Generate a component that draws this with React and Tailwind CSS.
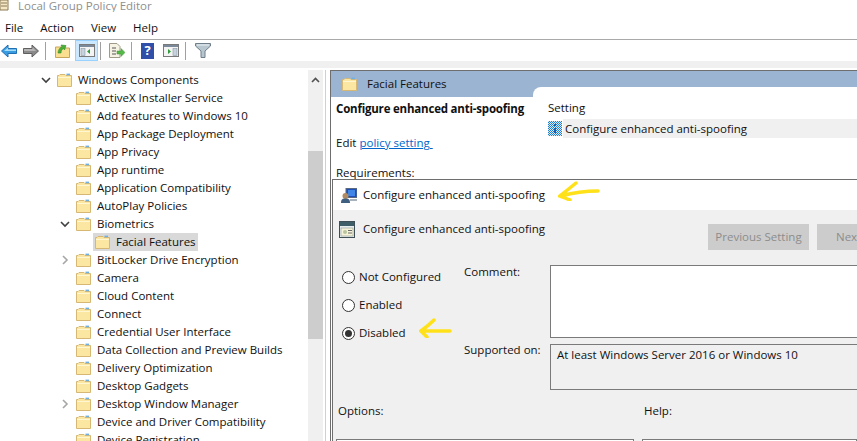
import React from 'react';

const Folder = ({ className = '' }) => (
  <svg width="15" height="14" viewBox="0 0 15 14" className={className}>
    <path d="M0.5 2.5 H2 L3 1.5 H8 L9 2.5 H14.5 V13.5 H0.5 Z" fill="#fbe6a2" stroke="#d6b874" />
    <path d="M1 4 H14 V5 H1 Z" fill="#fff6d2" />
    <path d="M9.5 0.6 H13 V2.2 H9.5 Z" fill="#6fb0e4" />
  </svg>
);

const Chevron = ({ open }) =>
  open ? (
    <svg width="10" height="10" viewBox="0 0 10 10">
      <path d="M1 3 L5 7 L9 3" fill="none" stroke="#404040" strokeWidth="1.6" />
    </svg>
  ) : (
    <svg width="10" height="10" viewBox="0 0 10 10">
      <path d="M3 1 L7 5 L3 9" fill="none" stroke="#a6a6a6" strokeWidth="1.6" />
    </svg>
  );

const treeRows = [
  { label: 'Windows Components', level: 0, open: true },
  { label: 'ActiveX Installer Service', level: 1 },
  { label: 'Add features to Windows 10', level: 1 },
  { label: 'App Package Deployment', level: 1 },
  { label: 'App Privacy', level: 1 },
  { label: 'App runtime', level: 1 },
  { label: 'Application Compatibility', level: 1 },
  { label: 'AutoPlay Policies', level: 1 },
  { label: 'Biometrics', level: 1, open: true },
  { label: 'Facial Features', level: 2, selected: true },
  { label: 'BitLocker Drive Encryption', level: 1, closed: true },
  { label: 'Camera', level: 1 },
  { label: 'Cloud Content', level: 1 },
  { label: 'Connect', level: 1 },
  { label: 'Credential User Interface', level: 1 },
  { label: 'Data Collection and Preview Builds', level: 1 },
  { label: 'Delivery Optimization', level: 1 },
  { label: 'Desktop Gadgets', level: 1 },
  { label: 'Desktop Window Manager', level: 1, closed: true },
  { label: 'Device and Driver Compatibility', level: 1 },
  { label: 'Device Registration', level: 1 },
];

const TreeRow = ({ row }) => {
  const indent = row.level === 0 ? 'pl-[41px]' : row.level === 1 ? 'pl-[60px]' : 'pl-[79px]';
  return (
    <div className={`flex h-[18px] shrink-0 items-center ${indent}`}>
      <span className="flex w-[16px] shrink-0 justify-start">
        {row.open && <Chevron open />}
        {row.closed && <Chevron />}
      </span>
      <span className={`flex h-[18px] items-center pr-[2px] ${row.selected ? 'bg-[#d9d9d9] -ml-[2px] pl-[2px]' : ''}`}>
        <Folder className="mr-[6px]" />
        <span className="whitespace-nowrap">{row.label}</span>
      </span>
    </div>
  );
};

const Sep = ({ className = '' }) => <div className={`h-[18px] w-px bg-[#a0a0a0] ${className}`} />;

const Toolbar = () => (
  <div className="flex h-[22px] items-center border-t border-[#a9a9a9] bg-white">
    <svg width="16" height="14" viewBox="0 0 16 14" className="ml-[1px]">
      <path d="M0.5 7 L7 1 V4.5 H15.5 V9.5 H7 V13 Z" fill="#3a9ce0" stroke="#1f6fb5" />
      <path d="M3 7 L7 3.5 V5.5 H15 V7 Z" fill="#a5dcf7" />
    </svg>
    <svg width="16" height="14" viewBox="0 0 16 14" className="ml-[6px]">
      <path d="M15.5 7 L9 1 V4.5 H0.5 V9.5 H9 V13 Z" fill="#8a8a8a" stroke="#5f5f5f" />
      <path d="M1 5 H9.5 V3 L13 7 H1 Z" fill="#b5b5b5" />
    </svg>
    <Sep className="ml-[6px]" />
    <svg width="15" height="14" viewBox="0 0 15 14" className="ml-[9px]">
      <path d="M0.5 3 H6 L7 4 H14.5 V13.5 H0.5 Z" fill="#fbdf90" stroke="#c7a55a" />
      <path d="M3 9 C3.5 5 5 3.5 7 3 L6 1 L11 1.5 L9.5 6 L8.5 4.5 C7 5 6 7 6 9 Z" fill="#4caf3a" stroke="#2f8a25" strokeWidth="0.6" />
    </svg>
    <div className="ml-[5px] flex h-[21px] w-[23px] items-center justify-center border border-[#99d1ff] bg-[#cce8ff]">
      <svg width="16" height="13" viewBox="0 0 16 13">
        <rect x="0.5" y="0.5" width="15" height="12" fill="#f4f4f4" stroke="#7a7a7a" />
        <rect x="1" y="1" width="14" height="2" fill="#7a8a9a" />
        <rect x="2" y="4.5" width="4" height="7" fill="#c6d3de" stroke="#7d8a96" strokeWidth="0.5" />
        <path d="M11 5 V10 L8 7.5 Z" fill="#2e9a3a" />
      </svg>
    </div>
    <Sep className="ml-[2px]" />
    <svg width="16" height="15" viewBox="0 0 16 15" className="ml-[8px]">
      <path d="M0.5 0.5 H8 L11 3.5 V14.5 H0.5 Z" fill="#f7f3e4" stroke="#a09a88" />
      <path d="M3 5 H7 M3 8 H7 M3 11 H7" stroke="#555" strokeWidth="1" />
      <path d="M8 8 H12 V5.5 L16 9.5 L12 13.5 V11 H8 Z" fill="#56b848" stroke="#3b9230" strokeWidth="0.5" />
    </svg>
    <Sep className="ml-[6px]" />
    <div className="ml-[9px] flex h-[16px] w-[13px] items-center justify-center bg-[#2f4fa8] text-[13px] font-bold leading-none text-white">?</div>
    <svg width="16" height="13" viewBox="0 0 16 13" className="ml-[9px]">
      <rect x="0.5" y="0.5" width="15" height="12" fill="#f4f4f4" stroke="#7a7a7a" />
      <rect x="1" y="1" width="14" height="2" fill="#7a8a9a" />
      <rect x="10" y="4.5" width="4" height="7" fill="#c6d3de" stroke="#7d8a96" strokeWidth="0.5" />
      <path d="M5 5 V10 L8 7.5 Z" fill="#2e9a3a" />
    </svg>
    <Sep className="ml-[6px]" />
    <svg width="16" height="15" viewBox="0 0 16 15" className="ml-[9px]">
      <path d="M0.5 0.5 H15.5 V3 L10 8 V14.5 H6 V8 L0.5 3 Z" fill="#b7c6cf" stroke="#6e7f8a" />
      <path d="M2 2 H14" stroke="#eef3f6" />
    </svg>
  </div>
);

const Radio = ({ label, checked }) => (
  <div className="flex h-[28px] items-center pl-[9px]">
    <span className="flex h-[13px] w-[13px] items-center justify-center rounded-full border border-[#333333] bg-white">
      {checked && <span className="h-[7px] w-[7px] rounded-full bg-[#333333]" />}
    </span>
    <span className="ml-[4px] whitespace-nowrap">{label}</span>
  </div>
);

const Dither = () => (
  <svg width="14" height="15" viewBox="0 0 14 15" className="shrink-0">
    <defs>
      <pattern id="dither" width="2" height="2" patternUnits="userSpaceOnUse">
        <rect width="2" height="2" fill="#1f7fd6" />
        <rect width="1" height="1" fill="#dbeaf7" />
        <rect x="1" y="1" width="1" height="1" fill="#dbeaf7" />
      </pattern>
    </defs>
    <rect width="14" height="15" fill="url(#dither)" />
    <path d="M6 3 H8 V5 H6 Z M6 7 H8 V12 H6 Z" fill="#1c5fa8" />
  </svg>
);

const Dialog = () => (
  <div className="ml-[1px] flex min-h-0 flex-1 flex-col border-l border-t border-[#6e6e6e] bg-[#f0f0f0]">
    <div className="flex h-[30px] shrink-0 items-center bg-white pl-[8px]">
      <svg width="16" height="15" viewBox="0 0 16 15">
        <rect x="5" y="0.5" width="11" height="9" fill="#1e4fb8" stroke="#5a6a80" />
        <rect x="7" y="2" width="7" height="6" fill="#3f86e8" />
        <circle cx="4.5" cy="8" r="3" fill="#b08a60" />
        <path d="M0 15 C0 11 2 10.5 4.5 10.5 C7 10.5 9 11 9 15 Z" fill="#3f5f80" />
        <rect x="9" y="11" width="7" height="2" fill="#a8b2bd" />
      </svg>
      <span className="ml-[6px] whitespace-nowrap">Configure enhanced anti-spoofing</span>
      <svg width="42" height="20" viewBox="0 0 42 20" className="ml-[13px] -mt-[8px] shrink-0">
        <path d="M18 2 C13 6 7 11 2 15 C5 16 9 18 12 19 M3 15 C14 12 28 10 40 10" fill="none" stroke="#ffe11a" strokeWidth="3.5" strokeLinecap="round" />
      </svg>
    </div>
    <div className="flex h-[41px] shrink-0 pl-[6px] pt-[11px]">
      <svg width="16" height="17" viewBox="0 0 16 17" className="shrink-0">
        <rect x="0.5" y="0.5" width="15" height="16" fill="#e8eef0" stroke="#3f4f55" />
        <rect x="1" y="1" width="14" height="4" fill="#3f5f68" />
        <rect x="2" y="7" width="12" height="8" fill="#f6f3d8" stroke="#7a8a80" strokeWidth="0.5" />
        <circle cx="6" cy="11" r="2" fill="#b8c4a0" />
        <path d="M9 9.5 H13 M9 12 H13" stroke="#6a6a6a" />
      </svg>
      <span className="ml-[8px] w-[345px] shrink-0 whitespace-nowrap leading-[16px]">Configure enhanced anti-spoofing</span>
      <div className="mt-[3px] flex shrink-0 gap-[8px]">
        <div className="flex h-[26px] w-[101px] items-center justify-center bg-[#cccccc] text-[#8c8c8c]">Previous Setting</div>
        <div className="flex h-[26px] w-[100px] items-center bg-[#cccccc] pl-[19px] text-[#8c8c8c]">Next</div>
      </div>
    </div>
    <div className="flex shrink-0 pt-[12px]">
      <div className="w-[131px] shrink-0">
        <Radio label="Not Configured" />
        <Radio label="Enabled" />
        <div className="flex items-center">
          <Radio label="Disabled" checked />
          <svg width="33" height="20" viewBox="0 0 33 20" className="ml-[13px] -mt-[10px] shrink-0">
            <path d="M15 2 C11 6 6 10 2 13 C4 15 6 17 8 19 M3 13 C12 13 22 13 31 13" fill="none" stroke="#ffe11a" strokeWidth="3.5" strokeLinecap="round" />
          </svg>
        </div>
      </div>
      <div className="flex min-w-0 flex-1 flex-col pt-[2px]">
        <div className="flex">
          <span className="w-[86px] shrink-0 leading-[14px]">Comment:</span>
          <div className="-mr-px h-[73px] flex-1 border border-[#7a7a7a] bg-white" />
        </div>
        <div className="mt-[6px] flex">
          <span className="w-[86px] shrink-0 leading-[12px]">Supported on:</span>
          <div className="-mr-px h-[46px] flex-1 border border-[#7a7a7a] px-[6px] pt-[1px]">At least Windows Server 2016 or Windows 10</div>
        </div>
      </div>
    </div>
    <div className="flex pt-[12px]">
      <span className="w-[311px] shrink-0 pl-[5px]">Options:</span>
      <span>Help:</span>
    </div>
    <div className="mt-[19px] flex gap-[8px] pl-[3px]">
      <div className="h-[20px] w-[298px] shrink-0 border border-[#7a7a7a] bg-white" />
      <div className="h-[20px] flex-1 border border-[#7a7a7a] bg-white" />
    </div>
  </div>
);

const DetailPane = () => (
  <div className="ml-[4px] flex min-w-0 flex-1 flex-col overflow-hidden border-l border-t border-[#6e6e6e] bg-white">
    <div className="flex h-[26px] shrink-0 items-center bg-[#9bb4d1] pl-[11px] pb-[1px]">
      <Folder />
      <span className="ml-[10px] whitespace-nowrap">Facial Features</span>
    </div>
    <div className="flex h-[82px] shrink-0">
      <div className="w-[202px] shrink-0 pl-[5px]">
        <div className="pt-[4px] font-bold whitespace-nowrap leading-[16px] tracking-[-0.2px]">Configure enhanced anti-spoofing</div>
        <div className="mt-[18px] whitespace-pre leading-[16px]">
          Edit <span className="text-[#0066cc] underline">policy setting </span>
        </div>
        <div className="mt-[14px] whitespace-nowrap leading-[16px]">Requirements:</div>
      </div>
      <div className="-mt-[10px] min-w-0 flex-1 rounded-tl-[8px] bg-white pl-[15px] pt-[13px]">
        <div className="leading-[16px]">Setting</div>
        <div className="mt-[3px] flex h-[19px] items-center">
          <Dither />
          <span className="ml-[1px] flex h-[19px] flex-1 items-center bg-[#f0f0f0] pl-[2px] whitespace-nowrap">Configure enhanced anti-spoofing</span>
        </div>
      </div>
    </div>
    <Dialog />
  </div>
);

export default function App() {
  return (
    <div className="flex h-[441px] w-[857px] flex-col overflow-hidden bg-white font-['Open_Sans','Noto_Sans',sans-serif] text-[11.5px] leading-[18px] text-[#101010]">
      <div className="flex h-[12px] items-center overflow-hidden text-[#8f8f8f]">
        <svg width="9" height="12" viewBox="0 0 9 12" className="shrink-0">
          <path d="M0 0 H8 V10 H0 Z" fill="#f3e7c4" stroke="#8a7a55" />
          <path d="M1 3 H7 M1 6 H7" stroke="#8a7a55" />
        </svg>
        <span className="ml-[9px] whitespace-nowrap">Local Group Policy Editor</span>
      </div>
      <div className="flex h-[27px] items-center gap-[17px] pl-[5px] pt-[5px]">
        <span>File</span>
        <span>Action</span>
        <span>View</span>
        <span>Help</span>
      </div>
      <Toolbar />
      <div className="h-[7px] shrink-0 bg-[#f0f0f0]" />
      <div className="flex min-h-0 flex-1 pt-[2px]">
        <div className="flex w-[323px] shrink-0">
          <div className="flex min-w-0 flex-1 flex-col overflow-hidden pt-[1px]">
            {treeRows.map((row) => (
              <TreeRow key={row.label} row={row} />
            ))}
          </div>
          <div className="flex w-[15px] shrink-0 flex-col bg-[#f0f0f0]">
            <div className="flex h-[20px] items-center justify-center">
              <svg width="9" height="6" viewBox="0 0 9 6">
                <path d="M1 5 L4.5 1.5 L8 5" fill="none" stroke="#505050" strokeWidth="1.6" />
              </svg>
            </div>
            <div className="mt-[61px] h-[188px] bg-[#cdcdcd]" />
          </div>
        </div>
        <div className="ml-[2px] w-px shrink-0 bg-[#d0d0d0]" />
        <DetailPane />
      </div>
    </div>
  );
}
